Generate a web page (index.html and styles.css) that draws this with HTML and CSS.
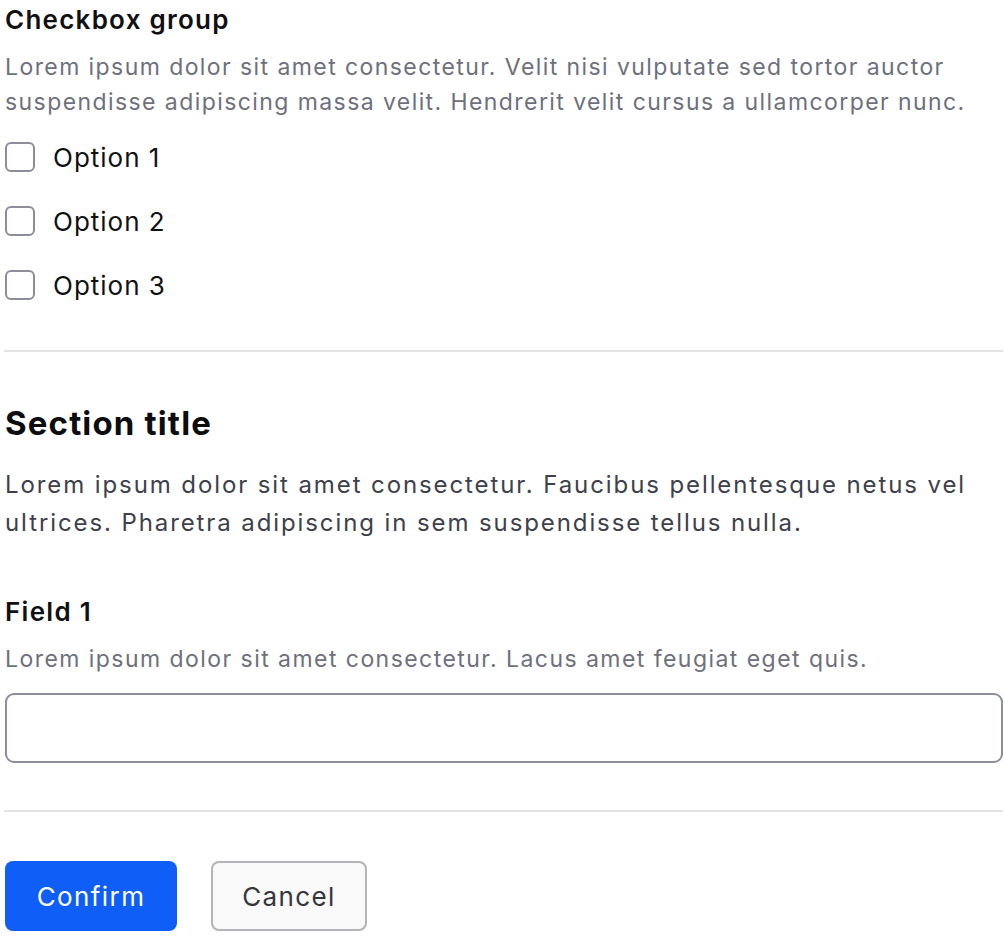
FILE: index.html
```html
<!DOCTYPE html>
<html lang="en">
<head>
<meta charset="utf-8">
<title>Form</title>
<link rel="stylesheet" href="styles.css">
</head>
<body>
<main class="page">
  <section class="group">
    <h3 class="group-title">Checkbox group</h3>
    <p class="group-desc">Lorem ipsum dolor sit amet consectetur. Velit nisi vulputate sed tortor auctor suspendisse adipiscing massa velit. Hendrerit velit cursus a ullamcorper nunc.</p>
    <div class="options">
      <label class="option"><span class="box"></span><span class="option-text">Option 1</span></label>
      <label class="option"><span class="box"></span><span class="option-text">Option 2</span></label>
      <label class="option"><span class="box"></span><span class="option-text">Option 3</span></label>
    </div>
  </section>
  <hr class="divider divider-1">
  <section class="section">
    <h2 class="section-title">Section title</h2>
    <p class="section-desc">Lorem ipsum dolor sit amet consectetur. Faucibus pellentesque netus vel ultrices. Pharetra adipiscing in sem suspendisse tellus nulla.</p>
    <div class="field">
      <div class="field-label">Field 1</div>
      <div class="field-desc">Lorem ipsum dolor sit amet consectetur. Lacus amet feugiat eget quis.</div>
      <div class="input"></div>
    </div>
  </section>
  <hr class="divider divider-2">
  <div class="actions">
    <button class="btn btn-primary">Confirm</button>
    <button class="btn btn-secondary">Cancel</button>
  </div>
</main>
</body>
</html>
```
FILE: styles.css
```css
* { box-sizing: border-box; }
html, body { margin: 0; padding: 0; background: #ffffff; }
body {
  font-family: Inter, "Noto Sans", "Liberation Sans", sans-serif;
  color: #111114;
}
.page {
  padding: 0 1px 0 4px;
  display: flex;
  flex-direction: column;
}
.group-title {
  margin: 4px 0 0 1px;
  font-size: 26px;
  line-height: 32px;
  font-weight: 600;
  letter-spacing: 1.25px;
  color: #111114;
}
.group-desc {
  margin: 14px 0 0 1px;
  font-size: 23px;
  line-height: 35px;
  letter-spacing: 1.42px;
  color: #6d707d;
}
.options {
  margin-top: 5px;
  display: flex;
  flex-direction: column;
}
.option {
  height: 64px;
  display: flex;
  align-items: center;
  padding-left: 1px;
}
.box {
  width: 30px;
  height: 30px;
  border: 2px solid #8b8e9a;
  border-radius: 6px;
  background: #fff;
  flex: none;
}
.option-text {
  margin-left: 18px;
  font-size: 26px;
  letter-spacing: 1px;
  color: #111114;
}
.divider {
  border: 0;
  height: 2px;
  background: #e3e3e8;
  margin: 0;
}
.divider-1 { margin-top: 33px; }
.section-title {
  margin: 51px 0 0 1px;
  font-size: 33px;
  line-height: 40px;
  font-weight: 700;
  letter-spacing: 1.15px;
  color: #0d0d10;
}
.section-desc {
  margin: 23px 0 0 1px;
  font-size: 24px;
  line-height: 38px;
  letter-spacing: 1.9px;
  color: #3d414b;
}
.field { margin-top: 54px; }
.field-label {
  margin-left: 1px;
  font-size: 26px;
  line-height: 32px;
  font-weight: 600;
  letter-spacing: 1.3px;
  color: #111114;
}
.field-desc {
  margin: 13px 0 0 1px;
  font-size: 23px;
  line-height: 36px;
  letter-spacing: 1.45px;
  color: #6d707d;
}
.input {
  margin: 16px 0 0 1px;
  height: 70px;
  border: 2px solid #8b8e9a;
  border-radius: 9px;
  background: #fff;
}
.divider-2 { margin-top: 47px; }
.actions {
  margin-top: 49px;
  display: flex;
  gap: 34px;
  padding-left: 1px;
}
.btn {
  height: 70px;
  border-radius: 8px;
  font-family: inherit;
  font-size: 26px;
  letter-spacing: 1.4px;
  padding: 0;
}
.btn-primary {
  width: 172px;
  background: #0f5ef7;
  border: 0;
  color: #fff;
}
.btn-secondary {
  width: 156px;
  background: #f9f9f9;
  border: 2px solid #b3b3b8;
  color: #35363c;
}
```
